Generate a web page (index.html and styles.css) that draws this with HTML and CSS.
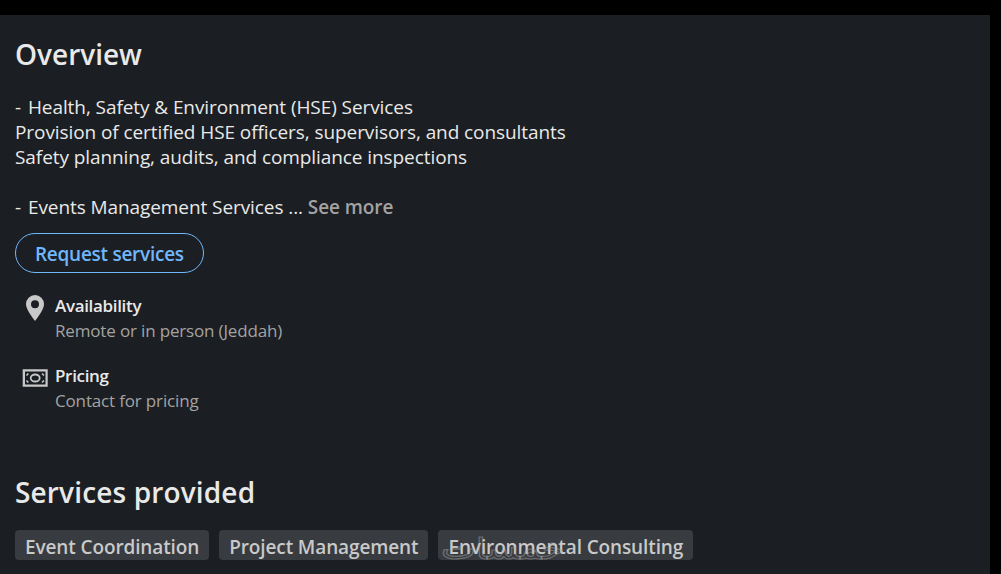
FILE: index.html
```html
<!doctype html>
<html>
<head>
    <meta charset="utf-8">
    <title>Overview</title>
    <link rel="stylesheet" href="styles.css">
</head>
<body>
	<div class='panel'>
		<h2 class='title'>Overview</h2>
		<p class='desc'><span class='dash'>-</span> Health, Safety &amp; Environment (HSE) Services<br>Provision of certified HSE officers, supervisors, and consultants<br>Safety planning, audits, and compliance inspections<br><br><span class='dash'>-</span> Events Management Services ... <span class='more'>See more</span></p>
		<a class='btn'>Request services</a>
		<div class='info'>
			<svg class='icon' width='26' height='30' viewBox='0 0 26 30'>
				<path fill='#c8c8c8' fill-rule='evenodd' d='M13 2a9 9 0 0 0-9 9c0 4 3 9 9 17 6-8 9-13 9-17a9 9 0 0 0-9-9zm0 5.300a4 4 0 1 1 0 8 4 4 0 0 1 0-8z'/>
			</svg>
			<div>
				<div class='label'>Availability</div>
				<div class='sub'>Remote or in person (Jeddah)</div>
			</div>
		</div>
		<div class='info'>
			<svg class='icon' width='26' height='30' viewBox='0 0 26 30'>
				<path fill='#c8c8c8' fill-rule='evenodd' d='M.7 6.300h25v17.500H.7zM3 8.500v13h20.500V8.500z'/>
				<ellipse cx='13.200' cy='15' rx='4.500' ry='3.500' fill='none' stroke='#c8c8c8' stroke-width='1.800'/>
				<path fill='none' stroke='#c8c8c8' stroke-width='1.500' d='M4.500 12.500l1.800-2M21.900 12.500l-1.800-2M4.500 17.500l1.800 2M21.900 17.500l-1.800 2'/>
			</svg>
			<div>
				<div class='label'>Pricing</div>
				<div class='sub'>Contact for pricing</div>
			</div>
		</div>
		<h2 class='title services'>Services provided</h2>
		<div class='tags'>
			<span class='tag'>Event Coordination</span>
			<span class='tag'>Project Management</span>
			<span class='tag'>Environmental Consulting</span>
		</div>
	</div>
	<span class='mark' dir='rtl' lang='ar'>خمسات</span>
</body>
</html>
```

FILE: styles.css
```css
*{margin: 0;padding: 0;box-sizing: border-box;}
html,body{height: 100%;overflow: hidden;}
body{background: #000;padding: 15px 11px 0 0;font-family: "Open Sans","Noto Sans",sans-serif;color: #e9e9e9;}
.panel{background: #1b1e22;height: 559px;padding: 21px 0 0 15px;overflow: hidden;}
.title{font-size: 28px;line-height: 36px;font-weight: 600;color: #e9e9e9;}
.desc{margin-top: 23px;font-size: 19px;line-height: 25px;letter-spacing: -.08px;color: #e9e9e9;}
.dash{margin-right: 2px;}
.more{color: #a3a3a3;font-weight: 600;}
.btn{
	display: inline-block;margin-top: 13px;height: 40px;line-height: 40px;padding: 0 19px;
	border: 1px solid #71b7fb;border-radius: 20px;font-size: 19px;font-weight: 600;
	color: #71b7fb;letter-spacing: -.27px;
}
.info{display: flex;gap: 7px;margin-left: 7px;margin-top: 20px;}
.icon{flex: none;}
.label{font-size: 17px;line-height: 25px;font-weight: 600;letter-spacing: -.33px;color: #e9e9e9;}
.sub{font-size: 17px;line-height: 25px;letter-spacing: -.16px;color: #a3a3a3;}
.services{margin-top: 61px;letter-spacing: .15px;}
.tags{display: flex;gap: 10px;margin-top: 20px;}
.tag{
	height: 30px;line-height: 34px;padding: 0 10px;background: #383b3f;
	border-radius: 4px;font-size: 19px;font-weight: 600;color: #c9c9c9;letter-spacing: -.12px;
}
.mark{
	position: absolute;left: 441px;top: 523px;font-family: "DejaVu Sans",sans-serif;font-size: 37px;
	color: transparent;-webkit-text-stroke: 1.500px rgba(170,170,170,.45);
	transform: scaleY(.8);transform-origin: bottom;
}
```
